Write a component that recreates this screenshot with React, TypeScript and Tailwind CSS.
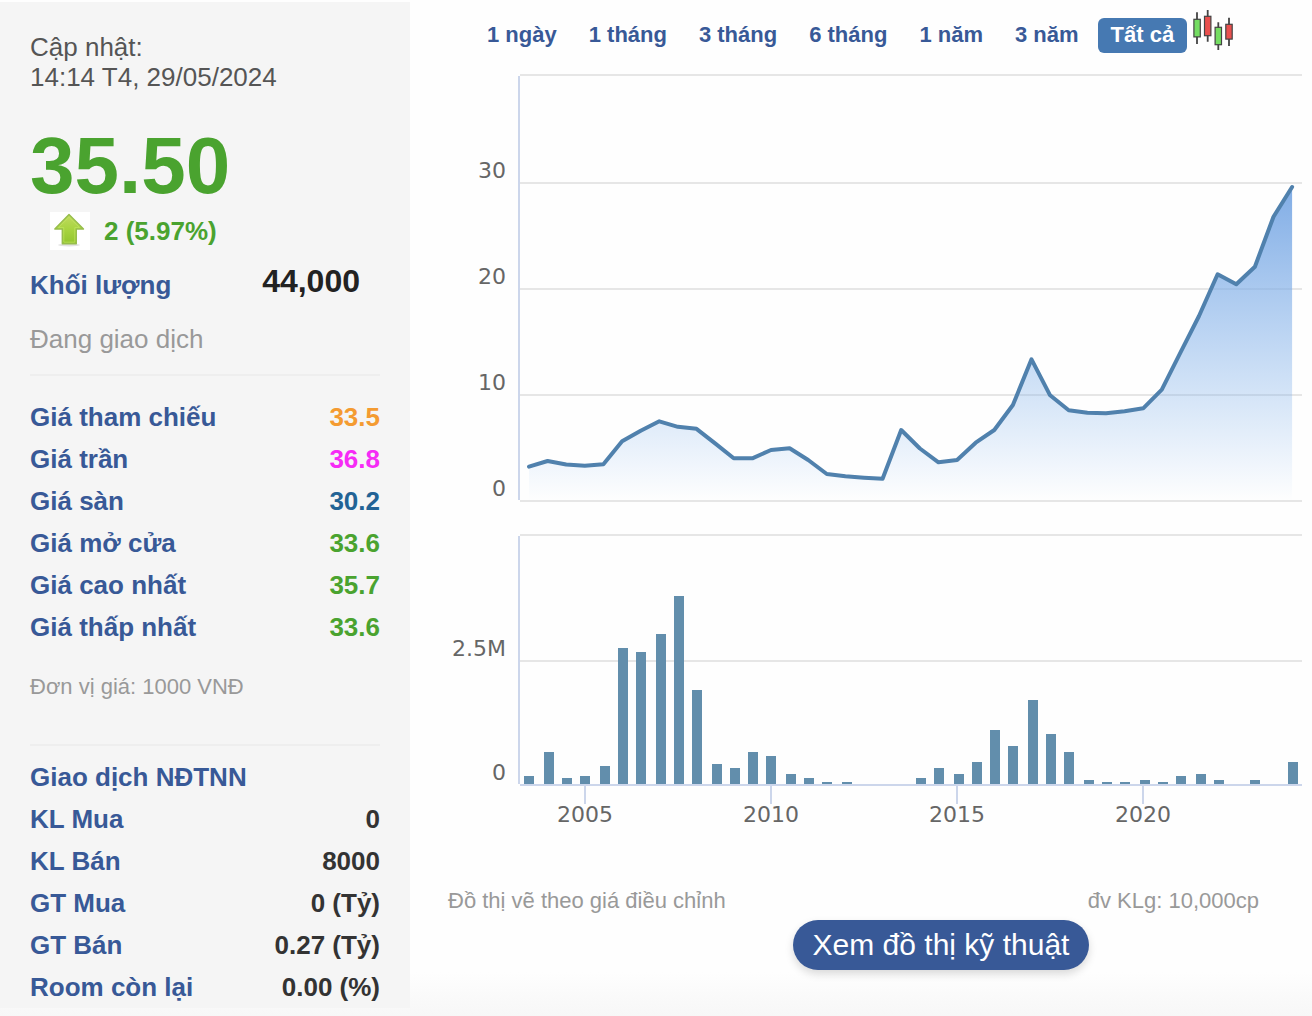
import { useState } from "react";
import clsx from "clsx";

type Row = { label: string; value: string; color?: string };

const PRICE_ROWS: Row[] = [
  { label: "Giá tham chiếu", value: "33.5", color: "text-[#f49b31]" },
  { label: "Giá trần", value: "36.8", color: "text-[#f62bf6]" },
  { label: "Giá sàn", value: "30.2", color: "text-[#226395]" },
  { label: "Giá mở cửa", value: "33.6", color: "text-[#4aa32f]" },
  { label: "Giá cao nhất", value: "35.7", color: "text-[#4aa32f]" },
  { label: "Giá thấp nhất", value: "33.6", color: "text-[#4aa32f]" },
];

const FOREIGN_ROWS: Row[] = [
  { label: "KL Mua", value: "0" },
  { label: "KL Bán", value: "8000" },
  { label: "GT Mua", value: "0 (Tỷ)" },
  { label: "GT Bán", value: "0.27 (Tỷ)" },
  { label: "Room còn lại", value: "0.00 (%)" },
];

const RANGES = ["1 ngày", "1 tháng", "3 tháng", "6 tháng", "1 năm", "3 năm", "Tất cả"];

// half-year closing prices, from mid 2003
const PRICES = [
  3.24, 3.77, 3.44, 3.32, 3.46, 5.63, 6.63, 7.52, 7.0, 6.81, 5.44, 4.03, 4.03, 4.81,
  4.98, 3.87, 2.55, 2.33, 2.2, 2.1, 6.7, 4.95, 3.65, 3.87, 5.5, 6.7, 9.06, 13.37,
  9.97, 8.56, 8.33, 8.27, 8.46, 8.75, 10.5, 14.0, 17.45, 21.39, 20.44, 22.1, 26.82, 29.62,
];

// traded volume in thousands, same periods
const VOLUMES = [
  160, 640, 120, 160, 360, 2740, 2660, 3020, 3790, 1900, 400, 320, 640, 560, 200, 120,
  40, 40, 0, 0, 0, 120, 320, 200, 440, 1090, 770, 1690, 1010, 640, 80, 40, 40, 80, 40,
  160, 200, 80, 0, 80, 0, 440,
];

const STEP = 18.612;
const FIRST_X = 89;
const LEFT = 80;
const RIGHT = 862;
const PRICE_BASE = 431;
const VOLUME_BASE = 714;

const xAt = (i: number) => FIRST_X + i * STEP;
const priceY = (v: number) => PRICE_BASE - v * 10.6;
const barHeight = (v: number) => Math.round((v / 2500) * 62) * 2;
const barX = (i: number) => Math.ceil((xAt(i) - 5) / 2) * 2;

function StockChart() {
  const line = PRICES.map((v, i) => `${xAt(i).toFixed(1)},${priceY(v).toFixed(1)}`).join(" L");
  const area = `M${line} L${xAt(PRICES.length - 1).toFixed(1)},${PRICE_BASE} L${FIRST_X},${PRICE_BASE} Z`;

  return (
    <svg
      viewBox="0 0 862 760"
      role="img"
      aria-label="Đồ thị giá và khối lượng"
      className="block h-auto w-full font-['DejaVu_Sans',sans-serif] text-[22px]"
    >
      <defs>
        <linearGradient id="area" gradientUnits="userSpaceOnUse" x1="0" y1="117" x2="0" y2={PRICE_BASE}>
          <stop offset="0" stopColor="#7ba9e4" stopOpacity="0.95" />
          <stop offset="1" stopColor="#7cb0ec" stopOpacity="0" />
        </linearGradient>
      </defs>

      <g stroke="#e6e6e6" strokeWidth="2">
        {[5, 113, 219, 325, 431, 465, 591].map((y) => (
          <line key={y} x1={LEFT} x2={RIGHT} y1={y} y2={y} />
        ))}
      </g>

      <path d={area} fill="url(#area)" />
      <path d={`M${line}`} fill="none" stroke="#5081ad" strokeWidth="4" strokeLinejoin="round" strokeLinecap="round" />

      <g fill="#628eac">
        {VOLUMES.map((v, i) => (
          <rect key={i} x={barX(i)} y={VOLUME_BASE - barHeight(v)} width="10" height={barHeight(v)} />
        ))}
      </g>

      <g stroke="#ccd6eb" strokeWidth="2">
        <line x1="79" x2="79" y1="6" y2="430" />
        <line x1="79" x2="79" y1="466" y2="714" />
        <line x1={LEFT} x2={RIGHT} y1="715" y2="715" />
        {[145, 331, 517, 703].map((x) => (
          <line key={x} x1={x} x2={x} y1="716" y2="734" />
        ))}
      </g>

      <g fill="#666666" textAnchor="end">
        <text x="66" y="108">30</text>
        <text x="66" y="214">20</text>
        <text x="66" y="320">10</text>
        <text x="66" y="426">0</text>
        <text x="66" y="586">2.5M</text>
        <text x="66" y="710">0</text>
      </g>
      <g fill="#666666" textAnchor="middle">
        <text x="145" y="752">2005</text>
        <text x="331" y="752">2010</text>
        <text x="517" y="752">2015</text>
        <text x="703" y="752">2020</text>
      </g>
    </svg>
  );
}

function UpArrow() {
  return (
    <svg viewBox="0 0 40 38" className="h-[38px] w-10 bg-white" aria-hidden="true">
      <defs>
        <linearGradient id="up" x1="0" y1="0" x2="0" y2="1">
          <stop offset="0" stopColor="#c0da60" />
          <stop offset="0.5" stopColor="#a8d440" />
          <stop offset="1" stopColor="#92c52e" />
        </linearGradient>
      </defs>
      <ellipse cx="19" cy="33" rx="11" ry="1.5" fill="#e2e2e2" />
      <path
        d="M19 2.6 L33.5 17 H26.3 V31.8 H12.3 V17 H4.8 Z"
        fill="url(#up)"
        stroke="#97bd4c"
        strokeWidth="1.4"
        strokeLinejoin="round"
      />
      <path d="M19 5.2 L29.5 15.6 H24.8 V30.2 H13.8 V15.6 H8.5 Z" fill="none" stroke="#c6e667" strokeWidth="1" opacity="0.6" />
    </svg>
  );
}

function CandlesIcon() {
  return (
    <svg viewBox="0 0 41 40" className="h-10 w-[41px]" aria-hidden="true">
      <g stroke="#444444" strokeWidth="1.8">
        <path d="M4 2.3V34M14.7 0V31.7M25.3 12.3V40M36 7.7V36" />
        <g strokeWidth="1.2">
          <rect x="0.9" y="9.3" width="6.4" height="17.6" fill="#74dd62" />
          <rect x="11.5" y="6.3" width="6.4" height="19.4" fill="#e9504e" />
          <rect x="22.1" y="17.3" width="6.4" height="17.4" fill="#74dd62" />
          <rect x="32.8" y="14.3" width="6.4" height="14.8" fill="#e9504e" />
        </g>
      </g>
    </svg>
  );
}

function StatRow({ label, value, color }: Row) {
  return (
    <div className="flex justify-between">
      <dt className="text-[#385997]">{label}</dt>
      <dd className={color ?? "text-[#333333]"}>{value}</dd>
    </div>
  );
}

export default function App() {
  const [range, setRange] = useState("Tất cả");

  return (
    <div className="flex min-h-screen items-start bg-[linear-gradient(to_top,#f7f7f7,#fefefe_44px)] pt-0.5 pb-2 font-['Liberation_Sans',Arial,sans-serif]">
      <aside className="w-[410px] shrink-0 bg-[#f5f5f5] px-[30px] pt-[30px] text-[26px] leading-[30px]">
        <p className="text-[#555555]">
          Cập nhật:
          <br />
          14:14 T4, 29/05/2024
        </p>

        <p className="mt-[34px] text-[80px] leading-[80px] font-bold text-[#4aa32f]">35.50</p>
        <div className="mt-1.5 flex items-center gap-3.5 pl-5 font-bold text-[#4aa32f]">
          <UpArrow />
          <span>2 (5.97%)</span>
        </div>

        <div className="mt-3 flex items-end justify-between pr-5 font-bold">
          <span className="text-[#385997]">Khối lượng</span>
          <span className="text-[32px] leading-[38px] text-[#222222]">44,000</span>
        </div>
        <p className="mt-6 text-[#999999]">Đang giao dịch</p>

        <dl className="mt-5 border-t-2 border-[#eeeeee] pt-5 leading-[42px] font-bold">
          {PRICE_ROWS.map((r) => (
            <StatRow key={r.label} {...r} />
          ))}
        </dl>
        <p className="mt-[26px] text-[22px] leading-[26px] text-[#999999]">Đơn vị giá: 1000 VNĐ</p>

        <section className="mt-11 border-t-2 border-[#eeeeee] pt-2.5 leading-[42px] font-bold">
          <h2 className="text-[#385997]">Giao dịch NĐTNN</h2>
          <dl>
            {FOREIGN_ROWS.map((r) => (
              <StatRow key={r.label} {...r} />
            ))}
          </dl>
        </section>
      </aside>

      <main className="min-w-0 flex-1 pt-2">
        <div className="flex gap-1.5 pl-16">
          <div className="flex gap-1.5 pt-2">
            {RANGES.map((r) => (
              <button
                key={r}
                type="button"
                onClick={() => setRange(r)}
                className={clsx(
                  "h-[35px] rounded-md px-[13px] pb-0.5 text-[22px] leading-[31px] font-bold whitespace-nowrap",
                  r === range ? "bg-[#4679b2] text-white" : "text-[#385997]",
                )}
              >
                {r}
              </button>
            ))}
          </div>
          <CandlesIcon />
        </div>

        <div className="mt-[17px] mr-2.5 ml-[30px]">
          <StockChart />
        </div>

        <div className="mt-[58px] flex justify-between pr-[53px] pl-[38px] text-[22px] leading-[26px] text-[#999999]">
          <span>Đồ thị vẽ theo giá điều chỉnh</span>
          <span>đv KLg: 10,000cp</span>
        </div>
        <div className="mt-1.5 flex justify-center pl-40">
          <button
            type="button"
            className="h-[50px] rounded-full bg-[#385997] px-5 text-[30px] leading-[50px] text-white shadow-[0_4px_8px_rgba(0,0,0,0.15)]"
          >
            Xem đồ thị kỹ thuật
          </button>
        </div>
      </main>
    </div>
  );
}
